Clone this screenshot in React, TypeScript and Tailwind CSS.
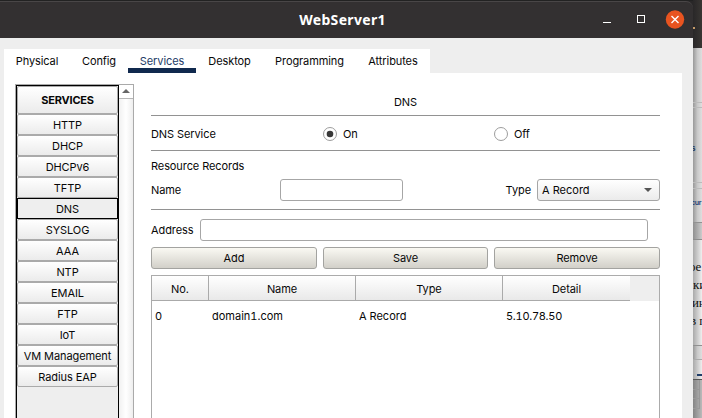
import React from "react";

const tabs = [
  { label: "Physical", cls: "w-[66px]" },
  { label: "Config", cls: "w-[58px]" },
  { label: "Services", cls: "w-[68px]" },
  { label: "Desktop", cls: "w-[67px]" },
  { label: "Programming", cls: "w-[93px]" },
  { label: "Attributes", cls: "w-[74px]" },
];

const services = [
  "HTTP", "DHCP", "DHCPv6", "TFTP", "DNS", "SYSLOG", "AAA",
  "NTP", "EMAIL", "FTP", "IoT", "VM Management", "Radius EAP",
];

function TitleBar() {
  return (
    <header className="flex h-[38px] shrink-0 items-center rounded-tr-[7px] border-t border-b border-t-[#494647] border-b-[#211f20] bg-[#333031]">
      <div className="w-[84px]" />
      <h1 className="flex-1 pb-[1px] text-center font-['Noto_Sans',sans-serif] text-[14px] leading-[20px] font-bold tracking-[0.33px] text-white">
        WebServer1
      </h1>
      <div className="flex w-[92px] items-center">
        <svg width="92" height="22" viewBox="0 0 92 22" fill="none">
          <path d="M2 13.5h8" stroke="#fff" />
          <rect x="36.5" y="6.5" width="7" height="7" stroke="#fff" />
          <circle cx="74" cy="10.5" r="9.2" fill="#e95420" />
          <path d="M70.5 7l7 7m0-7l-7 7" stroke="#fff" strokeWidth="1.4" />
        </svg>
      </div>
    </header>
  );
}

function TabBar() {
  return (
    <nav className="mt-[11px] ml-1 flex h-6 w-[426px] shrink-0 bg-white">
      {tabs.map((t) => (
        <div
          key={t.label}
          className={`flex justify-center whitespace-nowrap pt-[5px] ${t.cls} ${
            t.label === "Services" ? "border-b-5 border-[#10294e] text-[#253c68]" : ""
          }`}
        >
          {t.label}
        </div>
      ))}
    </nav>
  );
}

function Sidebar() {
  return (
    <aside className="flex h-full w-[119px] shrink-0 border-t border-r border-l border-[#aaa]">
      <div className="w-[103px] shrink-0 border-t border-r border-l border-black bg-[#eee]">
        <div className="flex h-7 items-center justify-center rounded-[2px] border border-[#aaa] bg-linear-to-b from-white to-[#ebebeb] font-bold tracking-[-0.2px]">
          SERVICES
        </div>
        {services.map((s) => (
          <div
            key={s}
            className={`flex h-[21px] items-center justify-center border whitespace-nowrap ${
              s === "DNS"
                ? "border-black bg-[#eee]"
                : "rounded-[2px] border-[#aaa] bg-linear-to-b from-white to-[#ebebeb]"
            }`}
          >
            {s}
          </div>
        ))}
      </div>
      <div className="flex-1 bg-linear-to-r from-[#f1f1f1] via-white to-[#eee]">
        <div className="flex h-[14px] items-center justify-center border-b border-[#b6b6b6] bg-white pb-[1px]">
          <svg width="8" height="4" viewBox="0 0 8 4">
            <path d="M0 4L4 0l4 4z" fill="#666" />
          </svg>
        </div>
      </div>
    </aside>
  );
}

function Radio({ checked = false, label }: { checked?: boolean; label: string }) {
  return (
    <div className="flex items-center gap-[6px]">
      <svg width="14" height="14" viewBox="0 0 14 14">
        <circle cx="7" cy="7" r="6.5" fill="#fff" stroke="#929292" strokeWidth=".9" />
        {checked && <circle cx="7" cy="7" r="3.3" fill="#383838" />}
      </svg>
      <span>{label}</span>
    </div>
  );
}

function RecordsTable() {
  const head = "flex items-center justify-center border-b border-[#aaa] bg-linear-to-b from-white to-[#e9e9e9] pt-[1px]";
  return (
    <section className="mt-[6px] flex-1 border-t border-r border-l border-[#ababab]">
      <div className="grid h-[25px] grid-cols-[57px_147px_147px_127px_29px]">
        <div className={`${head} border-r`}>No.</div>
        <div className={`${head} border-r`}>Name</div>
        <div className={`${head} border-r`}>Type</div>
        <div className={head}>Detail</div>
        <div className="bg-[#eee]" />
      </div>
      <div className="grid h-[30px] grid-cols-[57px_147px_147px_127px] items-center tracking-normal tabular-nums">
        <span className="pl-[3px]">0</span>
        <span className="pl-[3px]">domain1.com</span>
        <span className="pl-[3px]">A Record</span>
        <span className="pl-[3px] tracking-[-0.28px]">5.10.78.50</span>
      </div>
    </section>
  );
}

function DnsPanel() {
  return (
    <main className="ml-[17px] flex w-[509px] shrink-0 flex-col">
      <div className="flex h-[32px] items-end justify-center border-b border-[#929292] pb-[6px]">DNS</div>
      <div className="grid h-[35px] grid-cols-[172px_171px_1fr] items-center border-b border-[#929292] pt-[2px]">
        <span>DNS Service</span>
        <Radio checked label="On" />
        <Radio label="Off" />
      </div>
      <div className="flex h-[28px] items-center pt-[2px]">Resource Records</div>
      <div className="flex h-[31px] items-start border-b border-[#929292]">
        <span className="w-[129px] leading-[22px]">Name</span>
        <div className="h-[22px] w-[123px] rounded-[3px] border border-[#a6a6a6] bg-white" />
        <span className="w-[134px] pr-[6px] text-right leading-[22px]">Type</span>
        <div className="flex h-[22px] w-[123px] items-center justify-between rounded-[3px] border border-[#a6a6a6] bg-linear-to-b from-white to-[#ebebeb] pr-[7px] pl-1">
          <span className="tracking-normal">A Record</span>
          <svg width="8" height="4" viewBox="0 0 8 4">
            <path d="M0 0h8L4 4z" fill="#555" />
          </svg>
        </div>
      </div>
      <div className="mt-[9px] flex h-[22px]">
        <span className="w-[49px] leading-[22px]">Address</span>
        <div className="h-[22px] w-[448px] rounded-[3px] border border-[#a6a6a6] bg-white" />
      </div>
      <div className="mt-[6px] grid h-[22px] grid-cols-[166px_165px_166px] gap-[6px]">
        {["Add", "Save", "Remove"].map((b) => (
          <div
            key={b}
            className="flex items-center justify-center rounded-[3px] border border-[#a3a3a0] bg-linear-to-b from-[#faf9f3] to-[#d2d0c9]"
          >
            {b}
          </div>
        ))}
      </div>
      <RecordsTable />
    </main>
  );
}

/* Narrow slice of the desktop visible beside the window. */
function Backdrop() {
  const serif = "h-[18px] overflow-hidden whitespace-nowrap font-['Liberation_Serif',serif] text-[13px] leading-[18px] text-[#111]";
  return (
    <div className="flex w-[9px] shrink-0 flex-col overflow-hidden bg-linear-to-r from-[#999] via-[#c9c9c9] to-[#dfdfdf]">
      <div className="flex h-[48px] shrink-0 items-center bg-linear-to-r from-[#292728] to-[#393633]">
        <div className="mt-[7px] h-[2px] w-[2px] bg-[#c59b69]" />
      </div>
      <div className="h-[55px] shrink-0 border-b border-[#bbb]" />
      <div className="h-[5px] shrink-0 border-b border-[#bbb]" />
      <div className="h-[75px] shrink-0 border-b border-[#bbb] pt-[34px] text-[8px] leading-[12px] text-[#26395b]">
        <span className="-ml-[2px] font-bold">s</span>
      </div>
      <div className="h-[6px] shrink-0 border-b border-[#bbb]" />
      <div className="h-[34px] shrink-0 border-b border-[#929292] pt-[8px] text-[7px] leading-[12px] text-[#203d73]">
        <span className="-ml-[2px] font-semibold tracking-[-0.3px]">cur</span>
      </div>
      <div className="h-[17px] shrink-0 border-b border-[#8c8c8c] bg-linear-to-r from-[#909090] to-[#ccc]" />
      <div className="h-[106px] shrink-0 border-b border-[#909090] bg-linear-to-r from-[#aaa] to-[#efefef] pt-[18px]">
        <div className={serif}><span className="-ml-[4px]">ое</span></div>
        <div className={serif}>ки</div>
        <div className={serif}><span className="-ml-[1px]">ин</span></div>
        <div className={serif}><span className="-ml-[3px]">в п</span></div>
      </div>
      <div className="h-[14px] shrink-0 border-b border-[#aaa]" />
      <div className="h-[20px] shrink-0 border-b border-[#555] bg-linear-to-r from-[#aaa] to-[#eee] pt-[14px] pl-[4px]">
        <div className="h-[2px] bg-[#203d68]" />
      </div>
      <div className="flex-1 bg-linear-to-r from-[#858585] to-[#bababa]">
        <div className="mr-[2px] h-[10px] border-r border-b border-[#999]" />
        <div className="mr-[2px] h-[9px] border-r border-b border-[#999]" />
        <div className="mr-[2px] h-[10px] border-r border-b border-[#999]" />
      </div>
    </div>
  );
}

export default function App() {
  return (
    <div className="flex h-[418px] w-[702px] overflow-hidden bg-[#292728] font-['Inter',sans-serif] text-[11px] leading-[14px] tracking-[-0.09px] text-[#080808]">
      <div className="flex w-[693px] shrink-0 flex-col border-t border-[#222]">
        <TitleBar />
        <div className="-mt-[1px] flex min-h-0 flex-1 flex-col bg-[#eee]">
          <TabBar />
          <div className="ml-1 flex min-h-0 w-[678px] flex-1 bg-white pt-[11px] pl-[11px]">
            <Sidebar />
            <DnsPanel />
          </div>
        </div>
      </div>
      <Backdrop />
    </div>
  );
}
